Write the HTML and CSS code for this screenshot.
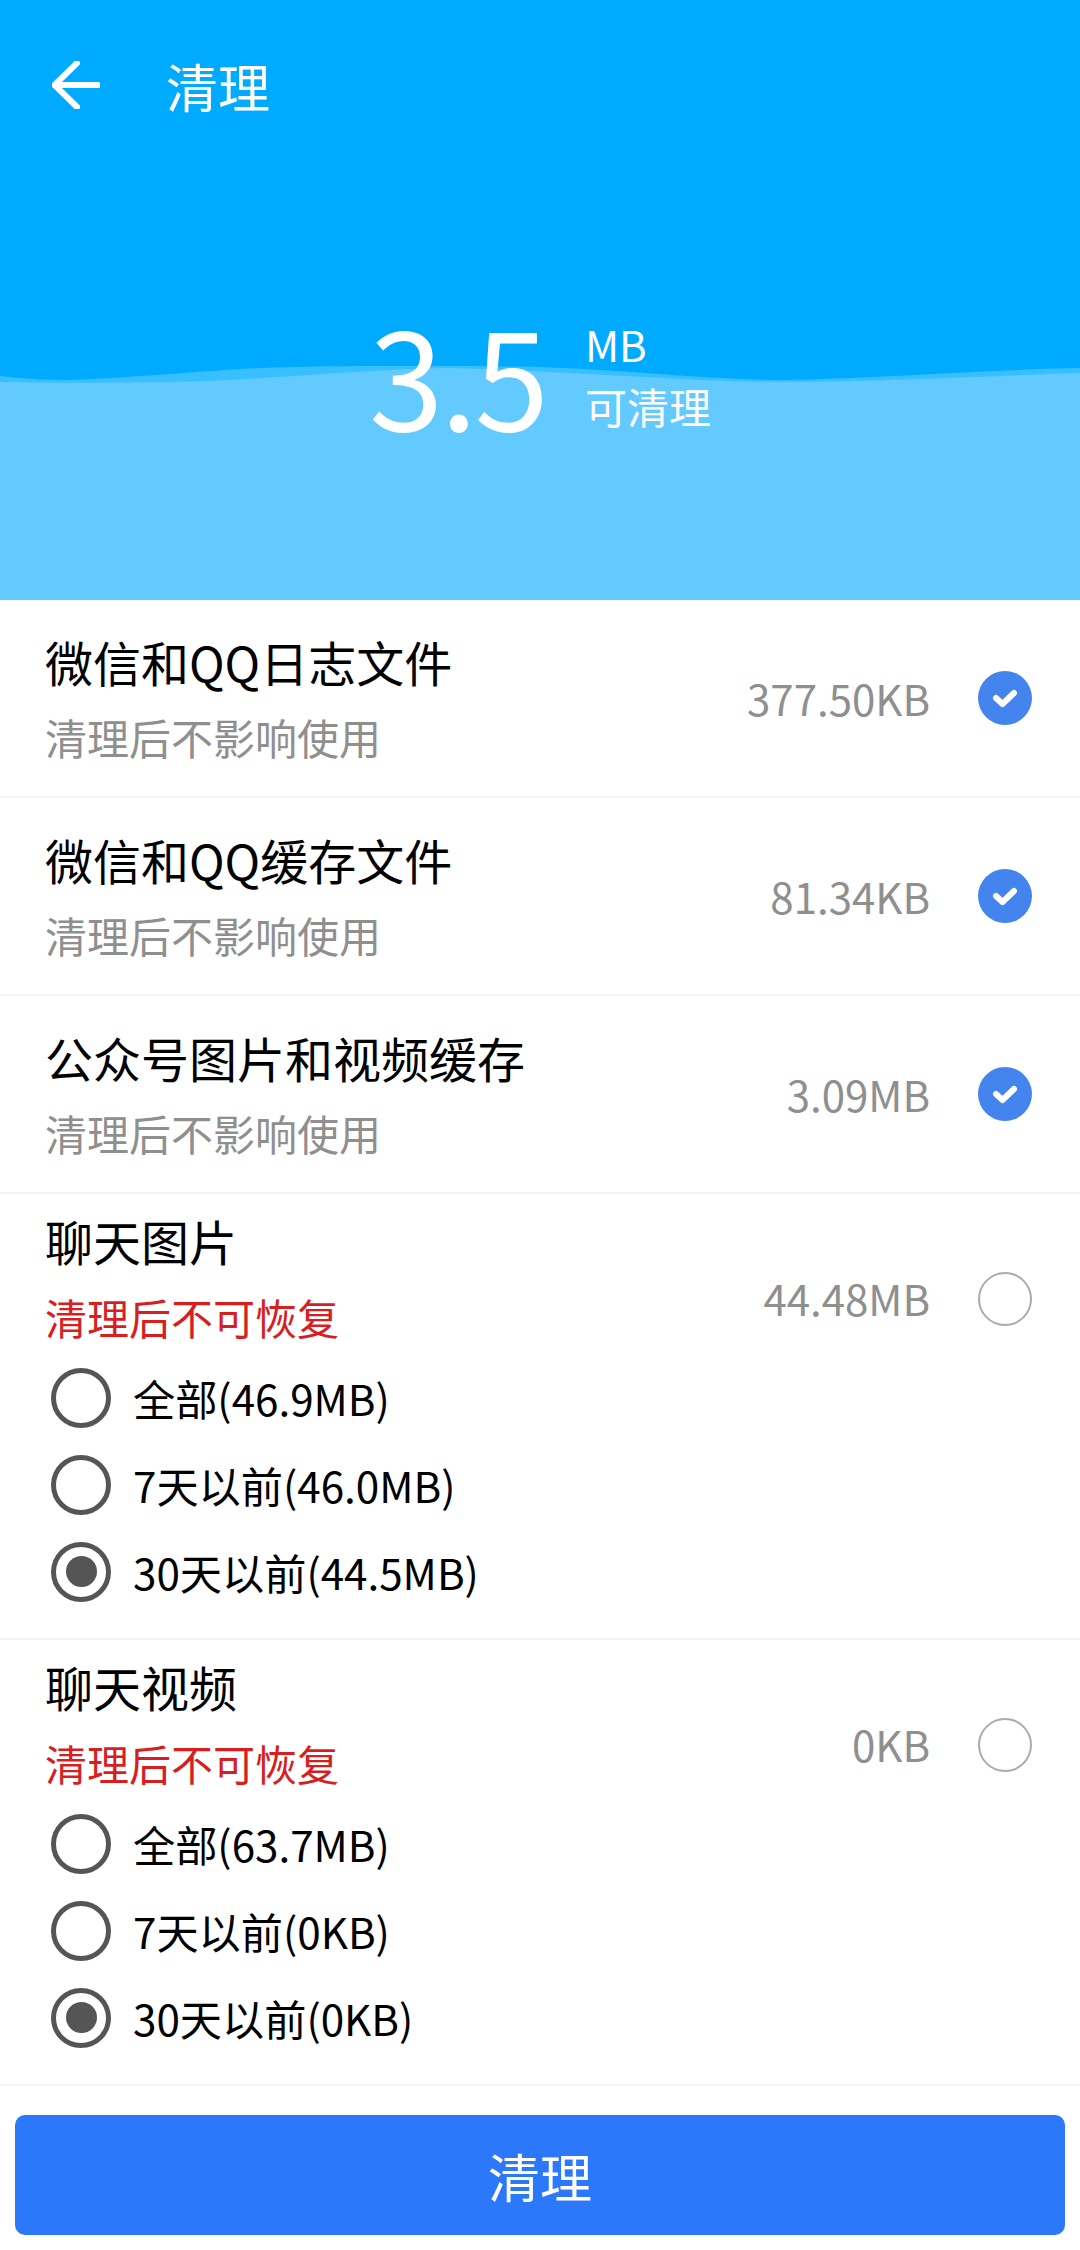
FILE: index.html
```html
<!DOCTYPE html>
<html lang="zh-CN">
<head>
    <meta charset="UTF-8">
    <meta name="viewport" content="width=device-width, initial-scale=1.0">
    <title>清理</title>
    <link rel="stylesheet" href="styles.css">
</head>
<body>

<header class="hero">
    <svg class="waves" viewBox="0 0 1080 234" preserveAspectRatio="none">
        <path class="wave-back" d="M0 10 C25 13 50 14 70 14 C140 12 210 3 293 1 C380 -1 480 0 540 1 C630 4 710 14 788 14 C880 12 980 4 1080 2 V234 H0 Z"/>
        <path class="wave-front" d="M0 16 C70 17 140 17 210 15 C290 11 360 4 443 2 C560 4 690 16 780 16 C880 16 990 10 1080 7 V234 H0 Z"/>
    </svg>
    <div class="topbar">
        <svg class="back" viewBox="0 0 48 48">
            <path d="M25 2 L2.500 24 L25 46 M2.500 24 H46"/>
        </svg>
        <span class="page-title">清理</span>
    </div>
    <div class="summary">
        <span class="amount">3.5</span>
        <div class="unit">
            <span class="unit-name">MB</span>
            <span class="unit-label">可清理</span>
        </div>
    </div>
</header>

<main>
    <section class="row">
        <div class="info">
            <div class="name">微信和QQ日志文件</div>
            <div class="note">清理后不影响使用</div>
        </div>
        <div class="side">
            <span class="size">377.50KB</span>
            <svg class="check" viewBox="0 0 54 54"><circle cx="27" cy="27" r="27"/><path d="M18 27 L24.500 33 L36 22"/></svg>
        </div>
    </section>
    <section class="row">
        <div class="info">
            <div class="name">微信和QQ缓存文件</div>
            <div class="note">清理后不影响使用</div>
        </div>
        <div class="side">
            <span class="size">81.34KB</span>
            <svg class="check" viewBox="0 0 54 54"><circle cx="27" cy="27" r="27"/><path d="M18 27 L24.500 33 L36 22"/></svg>
        </div>
    </section>
    <section class="row">
        <div class="info">
            <div class="name">公众号图片和视频缓存</div>
            <div class="note">清理后不影响使用</div>
        </div>
        <div class="side">
            <span class="size">3.09MB</span>
            <svg class="check" viewBox="0 0 54 54"><circle cx="27" cy="27" r="27"/><path d="M18 27 L24.500 33 L36 22"/></svg>
        </div>
    </section>

    <section class="row row-open">
        <div class="info">
            <div class="name name-open">聊天图片</div>
            <div class="note note-warn">清理后不可恢复</div>
            <ul class="options">
                <li><span class="radio"></span>全部(46.9MB)</li>
                <li><span class="radio"></span>7天以前(46.0MB)</li>
                <li><span class="radio radio-on"></span>30天以前(44.5MB)</li>
            </ul>
        </div>
        <div class="side side-open">
            <span class="size">44.48MB</span>
            <span class="uncheck"></span>
        </div>
    </section>
    <section class="row row-open">
        <div class="info">
            <div class="name name-open">聊天视频</div>
            <div class="note note-warn">清理后不可恢复</div>
            <ul class="options">
                <li><span class="radio"></span>全部(63.7MB)</li>
                <li><span class="radio"></span>7天以前(0KB)</li>
                <li><span class="radio radio-on"></span>30天以前(0KB)</li>
            </ul>
        </div>
        <div class="side side-open">
            <span class="size">0KB</span>
            <span class="uncheck"></span>
        </div>
    </section>
</main>

<footer class="actions">
    <button type="button" class="clean">清理</button>
</footer>

</body>
</html>
```

FILE: styles.css
```css
* {
    box-sizing: border-box;
}
body {
    margin: 0;
    font-family: "Noto Sans CJK SC", "Noto Sans", sans-serif;
    background-color: #fff;
    color: #000;
}
.hero {
    position: relative;
    height: 600px;
    background-color: #00abff;
    color: #fff;
    overflow: hidden;
}
.waves {
    position: absolute;
    left: 0;
    top: 366px;
    width: 1080px;
    height: 234px;
}
.wave-back {
    fill: #38bfff;
}
.wave-front {
    fill: #62caff;
}
.topbar {
    position: relative;
    display: flex;
    align-items: center;
    height: 170px;
    padding-left: 52px;
}
.back {
    width: 48px;
    height: 48px;
    fill: none;
    stroke: #fff;
    stroke-width: 6;
    stroke-linecap: round;
    stroke-linejoin: round;
}
.page-title {
    margin-left: 66px;
    font-size: 52px;
}
.summary {
    position: relative;
    display: flex;
    align-items: center;
    justify-content: center;
    gap: 39px;
    margin-top: 123px;
    height: 160px;
}
.amount {
    font-size: 134px;
    line-height: 160px;
    letter-spacing: -3px;
}
.unit {
    display: flex;
    flex-direction: column;
    gap: 4px;
    margin-top: 4px;
}
.unit-name,
.unit-label {
    font-size: 42px;
    line-height: 58px;
}
.row {
    display: flex;
    justify-content: space-between;
    align-items: center;
    height: 198px;
    padding: 0 48px 0 45px;
    border-bottom: 2px solid #f4f4f4;
}
.row-open {
    align-items: flex-start;
    height: 446px;
}
.name {
    font-size: 48px;
    line-height: 64px;
}
.name-open {
    margin-top: 14px;
}
.note {
    margin-top: 14px;
    font-size: 42px;
    line-height: 60px;
    color: #8f8f8f;
}
.note-warn {
    margin-top: 15px;
    color: #d81e1e;
}
.options {
    list-style: none;
    margin: 7px 0 0;
    padding: 0 0 0 6px;
}
.options li {
    display: flex;
    align-items: center;
    gap: 22px;
    height: 87px;
    font-size: 42.2px;
}
.radio {
    display: flex;
    align-items: center;
    justify-content: center;
    width: 60px;
    height: 60px;
    border: 5px solid #555;
    border-radius: 50%;
}
.radio-on::after {
    content: "";
    width: 31px;
    height: 31px;
    border-radius: 50%;
    background-color: #555;
}
.side {
    display: flex;
    align-items: center;
    gap: 48px;
}
.side-open {
    margin-top: 75px;
}
.size {
    margin-top: -2px;
    font-size: 42px;
    color: #8f8f8f;
}
.check {
    width: 54px;
    height: 54px;
}
.check circle {
    fill: #4384ee;
}
.check path {
    fill: none;
    stroke: #fff;
    stroke-width: 6;
    stroke-linecap: round;
    stroke-linejoin: round;
}
.uncheck {
    width: 54px;
    height: 54px;
    border: 2px solid #ababab;
    border-radius: 50%;
}
.actions {
    padding: 29px 15px 15px;
}
.clean {
    display: block;
    width: 100%;
    height: 120px;
    border: none;
    border-radius: 10px;
    background-color: #2b78fb;
    color: #fff;
    font-family: inherit;
    font-size: 52px;
}
```
